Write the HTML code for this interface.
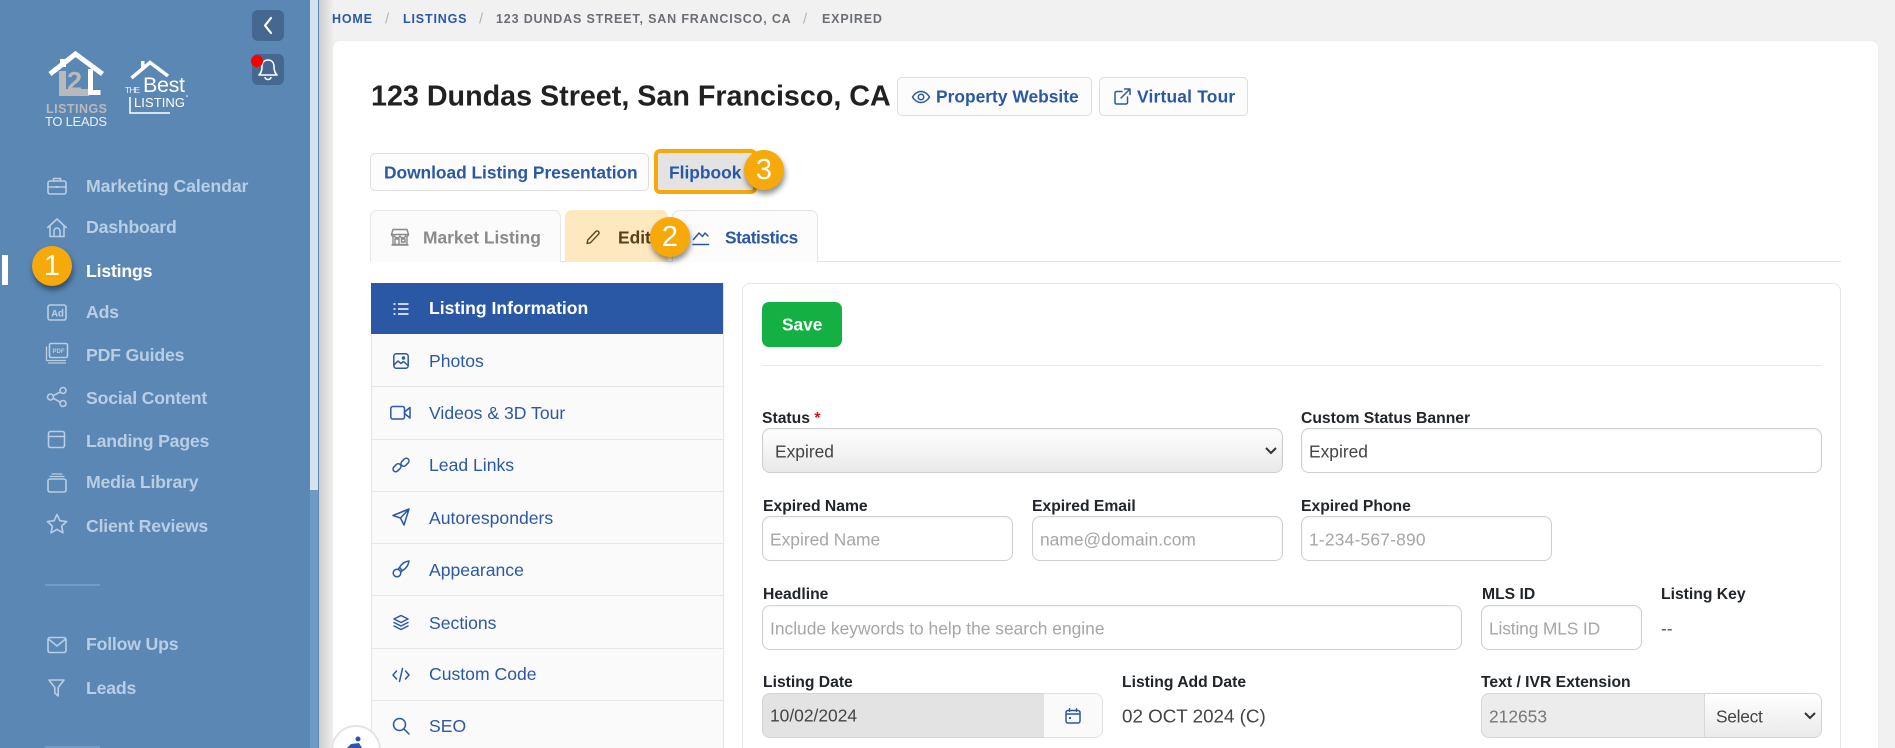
<!DOCTYPE html>
<html><head><meta charset="utf-8"><style>
*{box-sizing:border-box}
html,body{margin:0;padding:0;width:1895px;height:748px;overflow:hidden;background:#f1f1f1;font-family:"Liberation Sans",sans-serif}
#w{position:relative;width:1895px;height:748px;overflow:hidden;background:#f1f1f1}
.a{position:absolute}
.t{position:absolute;white-space:nowrap;transform:translateY(-50%);line-height:1}
.m{font-weight:700;font-size:17.7px;color:#b9cee4;left:86px;letter-spacing:-.2px}
.l{font-size:17.6px;color:#2b58a4;left:429px}
.b{font-weight:700;font-size:15.7px;color:#212529}
.i{position:absolute;border:1px solid #cfcfcf;border-radius:8px;background:#fff;box-shadow:inset 0 1px 2px rgba(0,0,0,.05)}
.p{font-size:17.4px;color:#a6a6a6}
.v{font-size:17.4px;color:#444}
.btn{position:absolute;background:#fcfcfc;border:1px solid #dedede;border-radius:5px}
.bt{font-weight:700;font-size:17.4px;color:#2b58a4}
.c{position:absolute;width:40px;height:40px;border-radius:50%;background:#f7a90a;color:#fff;font-size:29px;line-height:40px;text-align:center;box-shadow:1px 4px 6px rgba(0,0,0,.45)}
.row{position:absolute;left:371px;width:353px;height:1px;background:#e6e6e6}
svg{position:absolute;overflow:visible;fill:none}
.si{stroke:#b9cee4;stroke-width:1.6;stroke-linejoin:round;stroke-linecap:round}
.li{stroke:#2b58a4;stroke-width:1.5;stroke-linejoin:round;stroke-linecap:round}
.bc{font-weight:700;font-size:12.5px;letter-spacing:.84px;color:#6b6f75}
.sl{font-weight:400;font-size:15px;color:#b5b5b5}
</style></head><body><div id="w">

<!-- main bg shadow -->
<div class="a" style="left:318px;top:0;width:16px;height:748px;background:linear-gradient(90deg,#c9c9c9,#f1f1f1)"></div>

<!-- sidebar -->
<div class="a" style="left:0;top:0;width:310px;height:748px;background:#5a87b4"></div>
<div class="a" style="left:310px;top:0;width:8px;height:748px;background:#6f9ac2"></div>
<div class="a" style="left:310px;top:0;width:8px;height:490px;background:#d5e2ee"></div>
<div class="a" style="left:318px;top:0;width:1px;height:748px;background:#5a87b4"></div>

<div class="a" style="left:252px;top:10px;width:32px;height:31px;background:#44688f;border-radius:6px"></div>
<svg style="left:252px;top:10px" width="32" height="31"><path d="M19 8l-6 7.500 6 7.500" stroke="#fff" stroke-width="2.200" stroke-linecap="round" stroke-linejoin="round"/></svg>
<div class="a" style="left:252px;top:54px;width:32px;height:31px;background:#44688f;border-radius:6px"></div>
<svg style="left:252px;top:54px" width="32" height="31"><path d="M16 6c-4 0-6 3-6 7 0 4-1 6-3 8h18c-2-2-3-4-3-8 0-4-2-7-6-7z" stroke="#fff" stroke-width="1.600" stroke-linejoin="round"/><path d="M13 23a3 2.500 0 0 0 6 0" stroke="#fff" stroke-width="1.600"/></svg>
<div class="a" style="left:251px;top:55px;width:12px;height:12px;border-radius:50%;background:#f80000"></div>

<!-- logos -->
<svg style="left:0;top:0" width="200" height="130" viewBox="0 0 200 130">
<path d="M62.500 71v21.500H89" stroke="#b9b9b9" stroke-width="7"/>
<path d="M90.500 69v23.500h10" stroke="#fff" stroke-width="5"/>
<text x="67" y="90.500" font-size="27" font-weight="700" fill="#b9b9b9" font-family="Liberation Sans">2</text>
<path d="M60 59h6v8h-6z" fill="#fff"/>
<path d="M50 74L75.500 54 102.500 74" stroke="#fff" stroke-width="5"/>
<text x="46" y="113" font-size="12.500" font-weight="700" fill="#b9b9b9" font-family="Liberation Sans" textLength="61">LISTINGS</text>
<text x="45" y="126" font-size="13" fill="#e8eff6" font-family="Liberation Sans" textLength="62">TO LEADS</text>
<path d="M131.500 78L150 62.500 168 76" stroke="#fff" stroke-width="3.500"/>
<path d="M141 69v-8h3.500v5" fill="#fff"/>
<text x="125" y="93" font-size="8.500" fill="#e8eff6" font-family="Liberation Sans" textLength="15">THE</text>
<text x="143" y="92" font-size="21.500" fill="#fff" font-family="Liberation Sans" textLength="42">Best</text>
<text x="134" y="107" font-size="13" fill="#fff" font-family="Liberation Sans" textLength="51">LISTING</text>
<path d="M130 97v16h40" stroke="#fff" stroke-width="1.500"/>
<circle cx="187" cy="96" r=".8" fill="#fff"/>
</svg>

<!-- sidebar items -->
<svg class="si" style="left:46px;top:175px" width="22" height="22" viewBox="0 0 22 22"><rect x="2" y="6" width="18" height="13" rx="2"/><path d="M7.500 6V3.500h7V6M2 12h7.500M12.500 12H20"/><path d="M10.300 12h1.400" stroke-width="2"/></svg>
<svg class="si" style="left:46px;top:217px" width="22" height="22" viewBox="0 0 22 22"><path d="M1.800 10.500L11 2l9.200 8.500M4 9v10.500h14V9"/><path d="M8 19.500V14a3 3 0 0 1 6 0v5.500"/></svg>
<svg class="si" style="left:46px;top:302px" width="22" height="22" viewBox="0 0 22 22"><rect x="2" y="3" width="18" height="15" rx="2"/><text x="5.500" y="14.500" font-size="10.500" font-weight="700" fill="#b9cee4" stroke="none" font-family="Liberation Mono">Ad</text></svg>
<svg class="si" style="left:45px;top:342px" width="24" height="24" viewBox="0 0 24 24"><rect x="4.500" y="1.500" width="18" height="14" rx="1.500"/><path d="M1.500 5v13.500h19M3.500 21h17" stroke-width="1.300"/><text x="7.500" y="11" font-size="6" font-weight="700" fill="#b9cee4" stroke="none" font-family="Liberation Sans">PDF</text></svg>
<svg class="si" style="left:46px;top:386px" width="22" height="22" viewBox="0 0 22 22"><circle cx="4.500" cy="11" r="3"/><circle cx="17" cy="4.500" r="3"/><circle cx="17" cy="17.500" r="3"/><path d="M7.200 9.700l7.200-3.800M7.200 12.300l7.200 3.900"/></svg>
<svg class="si" style="left:46px;top:429px" width="22" height="22" viewBox="0 0 22 22"><rect x="2.500" y="2.500" width="16" height="16" rx="2"/><path d="M2.500 7.500h16"/></svg>
<svg class="si" style="left:46px;top:472px" width="22" height="22" viewBox="0 0 22 22"><rect x="2" y="7" width="18" height="13" rx="2"/><path d="M4 4.500h14M6 2h10" stroke-width="1.200"/></svg>
<svg class="si" style="left:45px;top:512px" width="24" height="24" viewBox="0 0 24 24"><path d="M12 2.500l2.900 6.200 6.700.8-5 4.600 1.400 6.700L12 17.400l-6 3.400 1.400-6.700-5-4.600 6.700-.8z"/></svg>
<svg class="si" style="left:46px;top:634px" width="22" height="22" viewBox="0 0 22 22"><rect x="2" y="3.500" width="18" height="15" rx="2"/><path d="M2.500 5L11 12l8.500-7"/></svg>
<svg class="si" style="left:46px;top:677px" width="22" height="22" viewBox="0 0 22 22"><path d="M3 3h15l-5.800 7.500v8.500l-3.400-3v-5.500z"/></svg>

<div class="t m" style="top:186.500px;letter-spacing:-.1px">Marketing Calendar</div>
<div class="t m" style="top:228px">Dashboard</div>
<div class="t m" style="top:272px;color:#fff">Listings</div>
<div class="t m" style="top:313px">Ads</div>
<div class="t m" style="top:356px">PDF Guides</div>
<div class="t m" style="top:399px">Social Content</div>
<div class="t m" style="top:442px">Landing Pages</div>
<div class="t m" style="top:483px">Media Library</div>
<div class="t m" style="top:527px">Client Reviews</div>
<div class="a" style="left:45px;top:584px;width:55px;height:2px;background:#739ac2"></div>
<div class="t m" style="top:645px">Follow Ups</div>
<div class="t m" style="top:689px">Leads</div>
<div class="a" style="left:45px;top:746px;width:55px;height:2px;background:#739ac2"></div>
<div class="a" style="left:2px;top:255px;width:6px;height:30px;background:#fff"></div>
<div class="c" style="left:32px;top:246px">1</div>

<!-- breadcrumb -->
<div class="t bc" style="left:332px;top:19px;color:#2b58a4">HOME</div>
<div class="t sl" style="left:385px;top:19px">/</div>
<div class="t bc" style="left:403px;top:19px;color:#2b58a4">LISTINGS</div>
<div class="t sl" style="left:479px;top:19px">/</div>
<div class="t bc" style="left:496px;top:19px">123 DUNDAS STREET, SAN FRANCISCO, CA</div>
<div class="t sl" style="left:803px;top:19px">/</div>
<div class="t bc" style="left:822px;top:19px">EXPIRED</div>

<!-- card -->
<div class="a" style="left:332px;top:40px;width:1547px;height:720px;background:#fff;border:1px solid #ececec;border-radius:8px"></div>

<div class="t" style="left:371px;top:97px;font-weight:700;font-size:28.700px;color:#212121">123 Dundas Street, San Francisco, CA</div>

<div class="btn" style="left:897px;top:77px;width:195px;height:39px"></div>
<svg class="li" style="left:911px;top:87px" width="20" height="20" viewBox="0 0 20 20"><path d="M1.500 10S4.500 4.500 10 4.500 18.500 10 18.500 10 15.500 15.500 10 15.500 1.500 10 1.500 10z"/><circle cx="10" cy="10" r="2.700"/></svg>
<div class="t bt" style="left:936px;top:97px">Property Website</div>
<div class="btn" style="left:1099px;top:77px;width:149px;height:39px"></div>
<svg class="li" style="left:1113px;top:87px" width="19" height="19" viewBox="0 0 19 19"><path d="M9 4.500H3.500A1.500 1.500 0 0 0 2 6v9.500A1.500 1.500 0 0 0 3.500 17H13a1.500 1.500 0 0 0 1.500-1.500V10M8 11L17 2M11.500 2H17v5.500"/></svg>
<div class="t bt" style="left:1137px;top:97px;letter-spacing:.2px">Virtual Tour</div>

<div class="btn" style="left:370px;top:153px;width:279px;height:38px"></div>
<div class="t bt" style="left:384px;top:173px;letter-spacing:-.05px">Download Listing Presentation</div>
<div class="a" style="left:654px;top:149px;width:103px;height:45px;background:#e3e3e3;border:4px solid #f7a90a;border-radius:6px"></div>
<div class="t bt" style="left:669px;top:173px">Flipbook</div>
<div class="c" style="left:744px;top:150px">3</div>

<!-- tabs -->
<div class="a" style="left:370px;top:261px;width:1471px;height:1px;background:#e3e3e3"></div>
<div class="a" style="left:370px;top:210px;width:191px;height:52px;background:#fbfbfb;border:1px solid #e6e6e6;border-bottom:0;border-radius:7px 7px 0 0"></div>
<svg style="left:390px;top:227px" width="20" height="20" viewBox="0 0 20 20" stroke="#8a8a8a" stroke-width="1.400"><path d="M3 2.500h14l1.500 5a2 2 0 0 1-3 1.500 3 3 0 0 1-5.500 0 3 3 0 0 1-5.500 0 2 2 0 0 1-3-1.500zM1.500 7.500h17M3 10v7.500h14V10M1.500 18h17M5 12h4v5.500H5zM11.500 12h3.500v3h-3.500z"/></svg>
<div class="t bt" style="left:423px;top:238px;color:#8a8a8a">Market Listing</div>
<div class="a" style="left:565px;top:210px;width:103px;height:52px;background:#fde8bf;border-radius:7px 7px 0 0"></div>
<svg style="left:585px;top:229px" width="16" height="16" viewBox="0 0 16 16" stroke="#5c4517" stroke-width="1.400" stroke-linejoin="round"><path d="M2 14.500l.8-3.500 8-8.500a1.900 1.900 0 0 1 2.700 2.700l-8 8.500z"/></svg>
<div class="t bt" style="left:618px;top:238px;color:#56421a">Edit</div>
<div class="a" style="left:672px;top:210px;width:146px;height:52px;background:#fcfcfc;border:1px solid #e6e6e6;border-bottom:0;border-radius:7px 7px 0 0"></div>
<svg class="li" style="left:692px;top:229px" width="18" height="17" viewBox="0 0 18 17"><path d="M1 15.500h15.500M1.500 10.500L7 4l3.500 3.500L13 4l3 3"/></svg>
<div class="t bt" style="left:725px;top:238px;letter-spacing:-.45px">Statistics</div>
<div class="c" style="left:650px;top:217px">2</div>

<!-- left list -->
<div class="a" style="left:371px;top:283px;width:353px;height:480px;background:#fafafa;border:1px solid #e6e6e6"></div>
<div class="a" style="left:371px;top:283px;width:352px;height:51px;background:#2b58a4"></div>
<div class="row" style="top:386px"></div><div class="row" style="top:439px"></div><div class="row" style="top:491px"></div><div class="row" style="top:543px"></div><div class="row" style="top:595px"></div><div class="row" style="top:648px"></div><div class="row" style="top:700px"></div>

<svg style="left:393px;top:301px" width="16" height="16" viewBox="0 0 16 16" stroke="#fff" stroke-width="1.400"><path d="M5 3h10.500M5 8h10.500M5 13h10.500M.5 3h2M.5 8h2M.5 13h2"/></svg>
<svg class="li" style="left:393px;top:353px" width="16" height="16" viewBox="0 0 16 16"><rect x=".8" y=".8" width="14.400" height="14.400" rx="2.500"/><path d="M1 12l4-4 3 2.500 2.500-2 4.500 4"/><circle cx="10.500" cy="5" r="1" fill="#2b58a4"/></svg>
<svg class="li" style="left:390px;top:405px" width="22" height="16" viewBox="0 0 22 16" stroke-width="1.800"><rect x=".8" y="1.500" width="13.700" height="12.500" rx="2"/><path d="M14.500 7L20 2.500v10.500l-5.500-4.500z"/></svg>
<svg class="li" style="left:393px;top:457px" width="16" height="16" viewBox="0 0 16 16" stroke-width="1.500"><rect x="-.5" y="8" width="9" height="5.500" rx="2.750" transform="rotate(-45 4 10.750)"/><rect x="7.500" y="2.500" width="9" height="5.500" rx="2.750" transform="rotate(-45 12 5.250)"/></svg>
<svg class="li" style="left:392px;top:508px" width="18" height="18" viewBox="0 0 18 18" stroke-width="1.700"><path d="M1 7.500L17 1l-5 16-3.500-7zM8.500 10L17 1"/></svg>
<svg class="li" style="left:392px;top:560px" width="18" height="18" viewBox="0 0 18 18" stroke-width="1.600"><path d="M17 1c-4 .5-7.500 3-9.500 6.500l3 3C14 8.500 16.500 5 17 1z"/><path d="M7.500 7.500l-1.500 1.800M10.500 10.500L8.700 12"/><circle cx="5" cy="13" r="3.800"/></svg>
<svg class="li" style="left:393px;top:614px" width="16" height="18" viewBox="0 0 16 18"><path d="M8 1.500l7 3.500-7 3.500L1 5zM1 8.500L8 12l7-3.500M1 12l7 3.500L15 12"/></svg>
<svg class="li" style="left:392px;top:666px" width="18" height="18" viewBox="0 0 18 18" stroke-width="1.700"><path d="M4.500 5L1 9l3.500 4M13.500 5L17 9l-3.500 4M10.500 2.500L7.500 15.500"/></svg>
<svg class="li" style="left:392px;top:717px" width="18" height="18" viewBox="0 0 18 18" stroke-width="1.800"><circle cx="7.500" cy="7.500" r="6"/><path d="M12 12l5 5"/></svg>

<div class="t l" style="top:309px;color:#fff;font-weight:700">Listing Information</div>
<div class="t l" style="top:362px">Photos</div>
<div class="t l" style="top:414px">Videos &amp; 3D Tour</div>
<div class="t l" style="top:466px">Lead Links</div>
<div class="t l" style="top:519px">Autoresponders</div>
<div class="t l" style="top:571px">Appearance</div>
<div class="t l" style="top:624px">Sections</div>
<div class="t l" style="top:675px">Custom Code</div>
<div class="t l" style="top:727px">SEO</div>

<!-- form panel -->
<div class="a" style="left:742px;top:283px;width:1099px;height:480px;background:#fff;border:1px solid #e6e6e6;border-radius:8px"></div>
<div class="a" style="left:762px;top:302px;width:80px;height:45px;background:#15b044;border-radius:7px"></div>
<div class="t" style="left:782px;top:325px;font-weight:700;font-size:17.300px;color:#fff">Save</div>
<div class="a" style="left:762px;top:365px;width:1059px;height:1px;background:#e8e8e8"></div>

<div class="t b" style="left:762px;top:419px">Status <span style="color:#e01010">*</span></div>
<div class="i" style="left:762px;top:428px;width:521px;height:45px;background:linear-gradient(#fff,#e9e9e9)"></div>
<div class="t v" style="left:775px;top:452px">Expired</div>
<svg style="left:1264px;top:446px" width="14" height="10"><path d="M2 2l5 5 5-5" stroke="#333" stroke-width="2"/></svg>

<div class="t b" style="left:1301px;top:419px">Custom Status Banner</div>
<div class="i" style="left:1301px;top:428px;width:521px;height:45px"></div>
<div class="t v" style="left:1309px;top:452px">Expired</div>

<div class="t b" style="left:763px;top:507px">Expired Name</div>
<div class="i" style="left:762px;top:516px;width:251px;height:45px"></div>
<div class="t p" style="left:770px;top:540px">Expired Name</div>
<div class="t b" style="left:1032px;top:507px">Expired Email</div>
<div class="i" style="left:1032px;top:516px;width:251px;height:45px"></div>
<div class="t p" style="left:1040px;top:540px">name@domain.com</div>
<div class="t b" style="left:1301px;top:507px">Expired Phone</div>
<div class="i" style="left:1301px;top:516px;width:251px;height:45px"></div>
<div class="t p" style="left:1309px;top:540px;letter-spacing:.2px">1-234-567-890</div>

<div class="t b" style="left:763px;top:595px">Headline</div>
<div class="i" style="left:762px;top:605px;width:700px;height:45px"></div>
<div class="t p" style="left:770px;top:629px">Include keywords to help the search engine</div>
<div class="t b" style="left:1482px;top:595px">MLS ID</div>
<div class="i" style="left:1481px;top:605px;width:161px;height:45px"></div>
<div class="t p" style="left:1489px;top:629px;letter-spacing:-.15px">Listing MLS ID</div>
<div class="t b" style="left:1661px;top:595px">Listing Key</div>
<div class="t v" style="left:1661px;top:629px;color:#555">--</div>

<div class="t b" style="left:763px;top:683px">Listing Date</div>
<div class="a" style="left:762px;top:693px;width:341px;height:45px;background:#fafafa;border:1px solid #e2e2e2;border-radius:8px"></div>
<div class="a" style="left:762px;top:693px;width:282px;height:45px;background:#e3e3e3;border:1px solid #d4d4d4;border-right:0;border-radius:8px 0 0 8px"></div>
<div class="t v" style="left:770px;top:716px">10/02/2024</div>
<svg class="li" style="left:1065px;top:708px" width="16" height="16" viewBox="0 0 16 16"><rect x="1" y="2.500" width="14" height="12.500" rx="2"/><path d="M1 6h14M4.500 .8v2.500M11.500 .8v2.500"/><rect x="4" y="9" width="2" height="2" fill="#2b58a4" stroke="none"/></svg>
<div class="t b" style="left:1122px;top:683px">Listing Add Date</div>
<div class="t v" style="left:1122px;top:717px;font-size:18.800px">02 OCT 2024 (C)</div>
<div class="t b" style="left:1481px;top:683px">Text / IVR Extension</div>
<div class="a" style="left:1481px;top:693px;width:341px;height:45px;background:linear-gradient(#fff,#eaeaea);border:1px solid #d4d4d4;border-radius:8px"></div>
<div class="a" style="left:1481px;top:693px;width:224px;height:45px;background:#ececec;border:1px solid #d8d8d8;border-radius:8px 0 0 8px"></div>
<div class="t p" style="left:1489px;top:717px;color:#777">212653</div>
<div class="t v" style="left:1716px;top:717px;letter-spacing:-.3px">Select</div>
<svg style="left:1803px;top:711px" width="14" height="10"><path d="M2 2l5 5 5-5" stroke="#333" stroke-width="2"/></svg>

<!-- accessibility -->
<div class="a" style="left:331px;top:725px;width:50px;height:50px;border-radius:50%;background:#fff;border:2px solid #e4e4e4"></div>
<svg style="left:345px;top:735px" width="22" height="16"><circle cx="13" cy="4" r="2.500" fill="#2b58a4"/><path d="M2 13l4-4 8-1 3 5z" fill="#2b58a4"/></svg>

</div></body></html>
